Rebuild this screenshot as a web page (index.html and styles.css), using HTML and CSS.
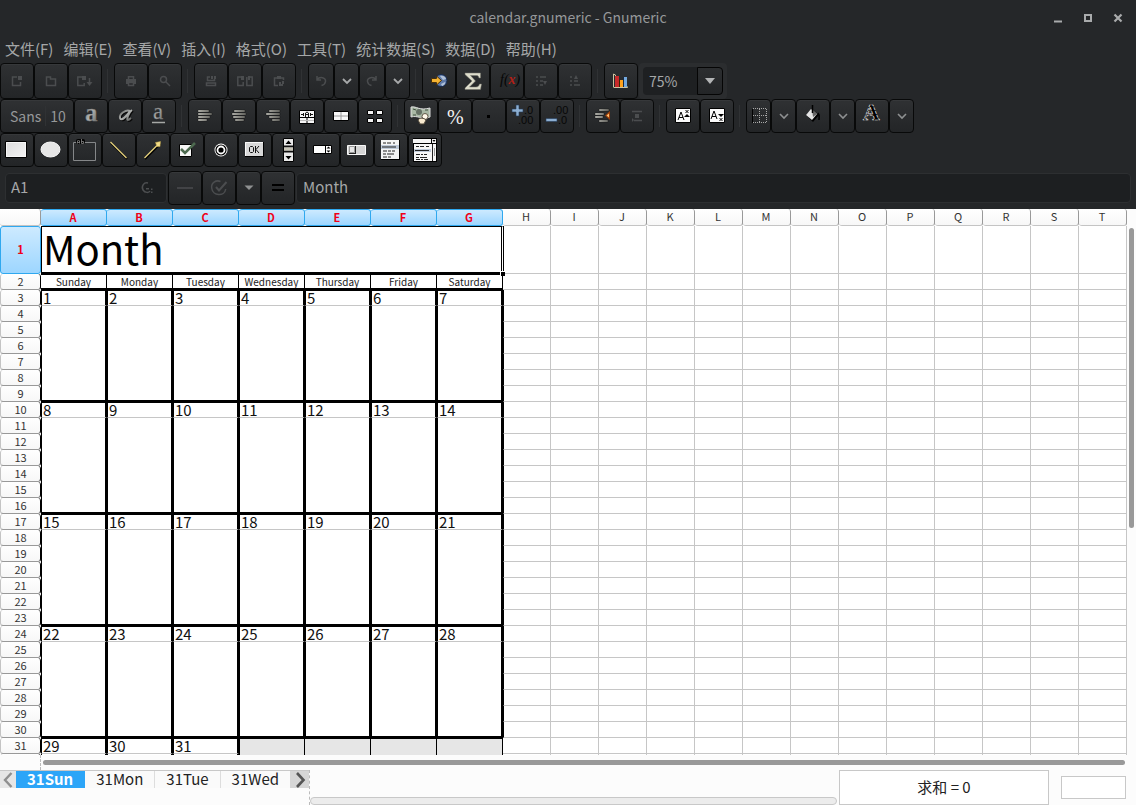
FILE: index.html
```html
<!DOCTYPE html>
<html lang="zh-CN">
<head>
<meta charset="utf-8">
<title>calendar.gnumeric - Gnumeric</title>
<link rel="stylesheet" href="styles.css">
</head>
<body>
<svg class="defs" aria-hidden="true">
  <defs>
    <linearGradient id="metal" x1="0" y1="0" x2="1" y2="1"><stop offset="0" stop-color="#606260"/><stop offset=".5" stop-color="#b0b2b0"/><stop offset="1" stop-color="#585a58"/></linearGradient>
    <linearGradient id="bar" x1="0" y1="0" x2="1" y2="0"><stop offset="0" stop-color="#d4d4cc"/><stop offset="1" stop-color="#74746e"/></linearGradient>
    <linearGradient id="paper" x1="0" y1="0" x2="1" y2="1"><stop offset="0" stop-color="#dcdcdc"/><stop offset="1" stop-color="#f4f4f4"/></linearGradient>
  </defs>
</svg>

<header class="chrome">
  <div class="titlebar">
    <h1 class="title">calendar.gnumeric - Gnumeric</h1>
    <div class="window-buttons">
      <button aria-label="最小化"><svg width="12" height="12"><path d="M2 9.500h8" stroke="#a9abac" stroke-width="2"/></svg></button>
      <button aria-label="最大化"><svg width="12" height="12"><path d="M3 3h6v6H3z" fill="none" stroke="#a9abac" stroke-width="2"/></svg></button>
      <button aria-label="关闭"><svg width="12" height="12"><path d="M2.500 2.500l7 7m0-7l-7 7" stroke="#a9abac" stroke-width="2.200"/></svg></button>
    </div>
  </div>

  <nav class="menubar">
    <button>文件(F)</button><button>编辑(E)</button><button>查看(V)</button><button>插入(I)</button><button>格式(O)</button><button>工具(T)</button><button>统计数据(S)</button><button>数据(D)</button><button>帮助(H)</button>
  </nav>

  <div class="toolbar toolbar-standard">
    <div class="group">
      <button class="tool dim" aria-label="新建"><svg class="s16" viewBox="0 0 16 16"><path d="M8 4H3.500v8.500h8V9" /><path class="f" d="M9 3h4v4H9z"/></svg></button>
      <button class="tool dim" aria-label="打开"><svg class="s16" viewBox="0 0 16 16"><path d="M3.500 12.500V4h4v2h5v6.500z"/></svg></button>
      <button class="tool dim" aria-label="保存"><svg class="s16" viewBox="0 0 16 16"><path d="M5 4H.8v8.500h6.400V10M12.500 5v6"/><path class="f" d="M5 3h4v4H5zM9.500 9h6l-3 4z"/></svg></button>
    </div>
    <div class="group">
      <button class="tool dim" aria-label="打印"><svg class="s16" viewBox="0 0 16 16"><path d="M5.500 6V3.700h5V6M5.500 9.500h5v3h-5z"/><path class="f" d="M3 6h10v5h-2V9H5v2H3z"/></svg></button>
      <button class="tool dim" aria-label="打印预览"><svg class="s16" viewBox="0 0 16 16"><circle cx="6.500" cy="6.500" r="3"/><path d="M9 9l4 4"/></svg></button>
    </div>
    <div class="group">
      <button class="tool dim" aria-label="剪切"><svg class="s16" viewBox="0 0 16 16"><path d="M7 4H4.500v3.500h7V6M3.500 10h9v2.500h-9z"/><path class="f" d="M8 3h2v3H8zM11 3h2v3h-2z"/></svg></button>
      <button class="tool dim" aria-label="复制"><svg class="s16" viewBox="0 0 16 16"><path d="M4 4H.8v8.500h5.400V9M13 4h2.200v8.500H9.800V4"/><path class="f" d="M4 3h3v4H4zM11 3h2v4h-2z"/></svg></button>
      <button class="tool dim" aria-label="粘贴"><svg class="s16" viewBox="0 0 16 16"><path d="M7 12.500H3.500V5h9v2"/><path class="f" d="M6 3h4v3H6zM8 9h2v4H8zM10 11h2v2h-2zM11 8h2v3h-2z"/></svg></button>
    </div>
    <div class="group">
      <button class="tool narrow dim" aria-label="撤销"><svg class="s16" viewBox="0 0 16 16"><path d="M4 3v4h4M4 6.500c3-3.500 9-2 8.500 2-.3 2-2 3.500-4 4"/></svg></button>
      <button class="tool narrow" aria-label="撤销列表"><svg class="s16" viewBox="0 0 16 16"><path d="M4 6l4 4 4-4" fill="none" stroke="#a8aaab" stroke-width="1.800"/></svg></button>
      <button class="tool narrow dim" aria-label="重做"><svg class="s16" viewBox="0 0 16 16"><path d="M12 3v4H8M12 6.500c-3-3.500-9-2-8.500 2 .3 2 2 3.500 4 4"/></svg></button>
      <button class="tool narrow" aria-label="重做列表"><svg class="s16" viewBox="0 0 16 16"><path d="M4 6l4 4 4-4" fill="none" stroke="#a8aaab" stroke-width="1.800"/></svg></button>
    </div>
    <div class="group">
      <button class="tool" aria-label="超链接"><svg class="s24" viewBox="0 0 24 24"><circle cx="14" cy="11.500" r="6" fill="#5f7aa8" stroke="#172b50"/><path d="M13 7c3-1 6 1 6 3l-3 1zM14 15l4-2c1 2-2 4-3 4z" fill="#b1c1d7"/><path d="M4.500 9.500h5V7l5 4.500-5 4.500v-2.500h-5z" fill="#f4b331" stroke="#49300a"/></svg></button>
      <button class="tool" aria-label="求和"><svg class="s24" viewBox="0 0 24 24"><path d="M4 4h15.500v5H18c-.5-2-1-2.500-3-2.500H9.500L14.500 12l-6 6H15c2 0 3-1 3.500-3h2l-1 5.500H4V19l7-7L4 5.500z" fill="#dddccb" stroke="#77766c" stroke-width=".5"/></svg></button>
      <button class="tool" aria-label="函数"><svg class="s24" viewBox="0 0 24 24"><text x="5" y="15" class="fx">f(<tspan fill="#b32017" font-weight="bold">x</tspan>)</text></svg></button>
      <button class="tool dim" aria-label="升序"><svg class="s16" viewBox="0 0 16 16"><path d="M3 4h2M3 8h2M3 12h2M7 4h6M7 8h3M7 12h3"/><path class="f" d="M10 8h4l-2 4z"/></svg></button>
      <button class="tool dim" aria-label="降序"><svg class="s16" viewBox="0 0 16 16"><path d="M3 4h2M3 8h2M3 12h2M7 8h4M7 12h6"/><path class="f" d="M7 6l2-4 2 4z"/></svg></button>
    </div>
    <div class="group">
      <button class="tool" aria-label="图表"><svg class="s24" viewBox="0 0 24 24"><path d="M4.500 18V5l2 1v2M4.500 18.500h14l-1-2" fill="none" stroke="#d0c4a0"/><path d="M6 7h4v11H6z" fill="#c92a2a"/><path d="M10 11h1v7h-1z" fill="#3d2500"/><path d="M11 11h3v7h-3z" fill="#ffa21c"/><path d="M14 8h1v10h-1z" fill="#192b42"/><path d="M15 8h3v10h-3z" fill="#74a9df"/></svg></button>
    </div>
    <div class="zoom">
      <input class="zoom-entry" value="75%" aria-label="缩放">
      <button class="zoom-arrow" aria-label="缩放列表"><svg width="12" height="8"><path d="M1 1h10L6 7z" fill="#b3b5b6"/></svg></button>
    </div>
  </div>

  <div class="toolbar">
    <div class="group">
      <button class="tool font" aria-label="字体 Sans 10"><span class="family">Sans</span><span class="size">10</span></button>
      <button class="tool" aria-label="粗体"><svg class="s24" viewBox="0 0 24 24"><text class="letter" x="6" y="17" font-size="25" font-weight="bold">a</text></svg></button>
      <button class="tool" aria-label="斜体"><svg class="s24" viewBox="0 0 24 24"><path d="M19 6c-3 2-6 10-4 10 1 0 2-1 3-2M17 7c-4-2-11 3-10 7 1 4 7-2 10-7" fill="none" stroke="#080808" stroke-width="2" transform="translate(1 1)"/><path d="M19 6c-3 2-6 10-4 10 1 0 2-1 3-2M17 7c-4-2-11 3-10 7 1 4 7-2 10-7" fill="none" stroke="url(#metal)" stroke-width="2"/></svg></button>
      <button class="tool" aria-label="下划线"><svg class="s24" viewBox="0 0 24 24"><text class="letter" x="6" y="15" font-size="23">a</text><path d="M5 18.500h13" stroke="#a6a8a6" stroke-width="1.500"/></svg></button>
    </div>
    <div class="group">
      <button class="tool" aria-label="左对齐"><svg class="s24" viewBox="0 0 24 24"><path class="bars" d="M5 6h11v2H5zM5 9h14v2H5zM5 12h12v2H5zM5 15h9v2H5z"/></svg></button>
      <button class="tool" aria-label="居中"><svg class="s24" viewBox="0 0 24 24"><path class="bars" d="M7 6h11v2H7zM5 9h14v2H5zM6 12h12v2H6zM8 15h9v2H8z"/></svg></button>
      <button class="tool" aria-label="右对齐"><svg class="s24" viewBox="0 0 24 24"><path class="bars" d="M8 6h11v2H8zM5 9h14v2H5zM8 12h11v2H8zM11 15h8v2h-8z"/></svg></button>
      <button class="tool" aria-label="跨列居中"><svg class="s24" viewBox="0 0 24 24"><path d="M4.500 6.500h15v13h-15z" fill="#f5f5f5" stroke="#000"/><path d="M4 13.500h16M12 14v5" stroke="#000"/><path d="M5 16.500h14" stroke="#bbb"/><path d="M6 10.500h3M15 10.500h3M8.500 9v3M15.500 9v3M10.500 13V9l1.500-1 1.500 1v4M10 10.500h4" fill="none" stroke="#111"/></svg></button>
      <button class="tool" aria-label="合并单元格"><svg class="s24" viewBox="0 0 24 24"><path d="M4.500 7.500h15v9h-15z" fill="#f7f7f7" stroke="#000"/><path d="M12 8v8M5 12h14" stroke="#9b9b9b"/></svg></button>
      <button class="tool" aria-label="拆分单元格"><svg class="s24" viewBox="0 0 24 24"><path d="M4.500 6.500h6v4h-6zM13.500 6.500h6v4h-6zM4.500 14.500h6v4h-6zM13.500 14.500h6v4h-6z" fill="#f2f2f2" stroke="#000"/></svg></button>
    </div>
    <div class="group">
      <button class="tool" aria-label="货币"><svg class="s24" viewBox="0 -1 24 24"><path d="M2 2c6-1 8 4 19 1v9c-9 3-12-2-19 0z" fill="#a9b8a5" stroke="#ddd"/><circle cx="10" cy="7" r="3" fill="#657064"/><path d="M4 4l3 1M16 5l3 0M4 10l3 0" stroke="#405040"/><circle cx="16" cy="11.500" r="3" fill="#fff8ea" stroke="#615848"/><path d="M9 15c2-3 6-2 8 0l-2 4h-4z" fill="#f8ead0" stroke="#4c4437"/></svg></button>
      <button class="tool" aria-label="百分比"><svg class="s24" viewBox="0 0 24 24"><text class="percent" x="4" y="20">%</text></svg></button>
      <button class="tool" aria-label="千位分隔"><svg class="s24" viewBox="0 0 24 24"><path d="M10 11h3v3h-3z" fill="#000"/></svg></button>
      <button class="tool" aria-label="增加小数"><svg class="s24" viewBox="0 0 24 24"><path d="M5 1h3v4h4v3H8v4H5V8H1V5h4z" fill="#8caed1" stroke="#243b57" stroke-width=".6"/><text class="digits" x="13" y="10">.0</text><text class="digits" x="7" y="20">.00</text></svg></button>
      <button class="tool" aria-label="减少小数"><svg class="s24" viewBox="0 0 24 24"><path d="M1 14.500h11v3H1z" fill="#8caed1" stroke="#243b57" stroke-width=".6"/><text class="digits" x="8" y="10">.00</text><text class="digits" x="13" y="20">.0</text></svg></button>
    </div>
    <div class="group">
      <button class="tool" aria-label="减少缩进"><svg class="s24" viewBox="0 0 24 24"><path class="bars" d="M8 5h10v2H8zM4 9h9v2H4zM4 12h8v2H4zM8 16h9v2H8z"/><path d="M19 7v9l-5-4.500z" fill="#9b3d08"/><path d="M18 9.500v4l-2.500-2z" fill="#ffc070"/></svg></button>
      <button class="tool dim" aria-label="增加缩进"><svg class="s16" viewBox="0 0 16 16"><path d="M3 3.500h10M5 12.500h8"/><path class="f" d="M6 6h4v4H6zM3 10v4l2-2z"/></svg></button>
    </div>
    <div class="group">
      <button class="tool" aria-label="上标"><svg class="s24" viewBox="0 0 24 24"><path d="M4.500 4.500h15v14h-15z" fill="#fafafa" stroke="#000"/><path d="M7 16l3-8 3 8M8 13.500h4M14.500 6l3 3m0-3l-3 3" fill="none" stroke="#000"/><path d="M13 13l3-3 3 3z"/></svg></button>
      <button class="tool" aria-label="下标"><svg class="s24" viewBox="0 0 24 24"><path d="M4.500 4.500h15v14h-15z" fill="#fafafa" stroke="#000"/><path d="M6 15l3-8 3 8M7 12.500h4M14.500 14l3 3m0-3l-3 3" fill="none" stroke="#000"/><path d="M13 10h6l-3 3z"/></svg></button>
    </div>
    <div class="group">
      <button class="tool narrow" aria-label="边框"><svg class="s16" viewBox="0 0 16 16"><path d="M1.500 1v14" stroke="#000"/><path d="M2 .5h13.500v14H2M8.500 1v13M2 7.500h13" fill="none" stroke="#a8a8a8" stroke-dasharray="1 1"/></svg></button>
      <button class="tool narrow" aria-label="边框列表"><svg class="s16" viewBox="0 0 16 16"><path d="M4 6l4 4 4-4" fill="none" stroke="#8e9091" stroke-width="1.600"/></svg></button>
      <button class="tool" aria-label="填充颜色"><svg class="s24" viewBox="0 0 24 24"><path d="M11 5l7 6-6 7-7-7z" fill="#000"/><path d="M10 5l6 5-5 6-6-5z" fill="#e5e5e5"/><path d="M11 5l5 5-4 3z" fill="#666"/><path d="M11.500 1v8M17 9c2 2 1 4 1 7" fill="none" stroke="#000" stroke-width="1.500"/></svg></button>
      <button class="tool narrow" aria-label="填充颜色列表"><svg class="s16" viewBox="0 0 16 16"><path d="M4 6l4 4 4-4" fill="none" stroke="#8e9091" stroke-width="1.600"/></svg></button>
      <button class="tool" aria-label="文字颜色"><svg class="s24" viewBox="0 0 24 24"><text class="color-letter" x="3" y="16">A</text></svg></button>
      <button class="tool narrow" aria-label="文字颜色列表"><svg class="s16" viewBox="0 0 16 16"><path d="M4 6l4 4 4-4" fill="none" stroke="#8e9091" stroke-width="1.600"/></svg></button>
    </div>
  </div>

  <div class="toolbar">
    <div class="group">
      <button class="tool" aria-label="矩形"><svg class="s24" viewBox="0 0 24 24"><path d="M.5 3.500h21v16H.5z" fill="url(#paper)" stroke="#000"/><path d="M1.500 4.500h19v14h-19z" fill="none" stroke="#f7f7f7"/></svg></button>
      <button class="tool" aria-label="椭圆"><svg class="s24" viewBox="0 0 24 24"><ellipse cx="11.500" cy="11.500" rx="9.500" ry="7.500" fill="#e6e6e6" stroke="#f8f8f8"/></svg></button>
      <button class="tool" aria-label="框架"><svg class="s24" viewBox="0 0 24 24"><path d="M.5 4.500h22v18H.5z" fill="none" stroke="#858789"/><rect x="3" y="1" width="9" height="5" rx="2"/><path d="M4.500 5.500V3L5.500 2l1 1v2.500M4.500 4.500h2M8.500 1v4.500h2v-2h-2" fill="none" stroke="#888" stroke-width=".8"/></svg></button>
      <button class="tool" aria-label="直线"><svg class="s24" viewBox="0 0 24 24"><path d="M4 5l16 16" stroke="#000" stroke-width="2"/><path d="M3.500 4l16 16" stroke="#e9d57f" stroke-width="1.200"/></svg></button>
      <button class="tool" aria-label="箭头"><svg class="s24" viewBox="0 0 24 24"><path d="M4 21L19 6" stroke="#000" stroke-width="2"/><path d="M3.500 20L18 5.500" stroke="#e9d57f" stroke-width="1.200"/><path d="M14.500 4.500l5-1-.5 5-3 0z" fill="#f2dc87" stroke="#c3a749" stroke-width=".5"/></svg></button>
      <button class="tool" aria-label="复选框"><svg class="s24" viewBox="0 0 24 24"><path d="M4.500 6.500h12v12h-12z" fill="#f6f6f6" stroke="#000"/><path d="M6 11l4 4L20 5" fill="none" stroke="#4d6a4f" stroke-width="2.600"/></svg></button>
      <button class="tool" aria-label="单选按钮"><svg class="s24" viewBox="0 0 24 24"><circle cx="12" cy="12" r="6.500" fill="#fff"/><circle cx="12" cy="12" r="5" fill="none" stroke="#000" stroke-width="1.200"/><circle cx="12" cy="12" r="2.600"/></svg></button>
      <button class="tool" aria-label="按钮"><svg class="s24" viewBox="0 0 24 24"><path d="M2 4h19v15H2z"/><path d="M2 4h18v14H2z" fill="#d8d8d8" /><path d="M2.500 18V4.500H20" fill="none" stroke="#f8f8f8"/><path d="M7.500 8.500h2l1 1v4l-1 1h-2l-1-1v-4zM12.500 8v7M16 8l-3 3.500 3 3.500" fill="none" stroke="#111"/></svg></button>
      <button class="tool" aria-label="滚动条"><svg class="s24" viewBox="0 0 24 24"><path d="M6.500.500h10v23h-10z" fill="#e9e9e9" stroke="#000"/><path d="M7 8.500h9M7 13.500h9" stroke="#111" stroke-width="2"/><path d="M8.500 6l3-3.500 3 3.500zM8.500 18l3 3.500 3-3.500z"/><path d="M7 9.500h9v3H7z" fill="#c8c6b8"/></svg></button>
      <button class="tool" aria-label="微调按钮"><svg class="s24" viewBox="0 0 24 24"><path d="M2.500 7.500h18v8h-18z" fill="#fff" stroke="#000"/><path d="M14.500 7v9" stroke="#000"/><path d="M15.500 10.500l2-2 2 2zM15.500 12.500l2 2 2-2z"/></svg></button>
      <button class="tool" aria-label="滑块"><svg class="s24" viewBox="0 0 24 24"><path d="M2.500 7.500h18v9h-18z" fill="#d5d5d5" stroke="#f8f8f8"/><path d="M4.500 8.500h5v6h-5z" fill="#e7e7e7" stroke="#999"/><path d="M10.500 8v8M4 15.500h6" stroke="#222"/></svg></button>
      <button class="tool" aria-label="列表"><svg class="s24" viewBox="0 0 24 24"><path d="M2 2h19v20H2z"/><path d="M2 2h18v19H2z" fill="#f4f4f4"/><path d="M2 7h18v4H2z" fill="#bfcad9"/><path d="M4 5h3m1 0h4m2 0h2M3 9h14M4 13h4m1 0h3m1 0h3M4 16h3m1 0h7M4 19h4m1 0h3" stroke="#222" stroke-width="1.200"/></svg></button>
      <button class="tool" aria-label="组合框"><svg class="s24" viewBox="0 0 24 24"><path d="M0 0h24v24H0z"/><path d="M0 1h18v4H0zM19 1h4v4h-4zM1 6h22v17H1z" fill="#f6f6f6"/><path d="M19.500 2h3L21 4z"/><path d="M1 11h17v3H1z" fill="#bfcad9"/><path d="M3 8.500h3m1 0h4m2 0h3M2 12.500h14M3 16.500h4m1 0h2m1 0h3M3 19.500h3m1 0h7M3 21.500h4m1 0h2m1 0h4M19.500 6v17" stroke="#222"/><path d="M21.500 10v8" stroke="#999"/></svg></button>
    </div>
  </div>

  <div class="formula-bar">
    <div class="name-box"><input value="A1" aria-label="单元格"><svg width="14" height="14"><path d="M8 2C4 1 1 5 3 9c2 3 6 3 7 1" fill="none" stroke="#4d4f51" stroke-width="1.500"/><path d="M11 7.500h1.500V9H11zM11 10.500h1.500V12H11zM6 7h3v1.500H6z" fill="#4d4f51"/></svg></div>
    <div class="group">
      <button class="tool dim" aria-label="取消"><svg class="s16" viewBox="0 0 16 16"><path d="M0 8h16"/></svg></button>
      <button class="tool dim" aria-label="接受"><svg class="s16" viewBox="0 0 16 16"><path d="M9.500 1.500C5-.500 0 3 .700 8c.700 8 13 9 14 1"/><path d="M5 7l3 3.500L15.500 2" stroke-width="2"/></svg></button>
      <button class="tool narrow" aria-label="接受列表"><svg width="12" height="8"><path d="M1.500 1.500h9L6 6z" fill="#8f9192"/></svg></button>
      <button class="tool" aria-label="输入公式"><svg width="12" height="8"><path d="M0 1h12M0 6h12" stroke="#000" stroke-width="2"/></svg></button>
    </div>
    <input class="formula" value="Month" aria-label="公式">
  </div>
</header>

<main class="workspace">
  <div class="sheet"><table class="grid" id="grid"></table></div>
  <div class="vscroll"><div class="thumb"></div></div>
</main>
<div class="hscroll"><div class="thumb"></div></div>

<footer class="status">
  <div class="tabs">
    <button class="arrow" aria-label="上一张"><svg width="12" height="16"><path d="M9.500 1L3 8l6.500 7" fill="none" stroke="#8f8f8f" stroke-width="2.400"/></svg></button>
    <button class="tab active">31Sun</button><button class="tab">31Mon</button><button class="tab">31Tue</button><button class="tab">31Wed</button>
    <button class="arrow next" aria-label="下一张"><svg width="12" height="16"><path d="M3 1l6.500 7L3 15" fill="none" stroke="#555" stroke-width="2.600"/></svg></button>
  </div>
  <div class="message"><div class="track"></div></div>
  <output class="sum">求和 = 0</output>
  <div class="progress"></div>
</footer>
<script src="app.js"></script>
</body>
</html>
```
FILE: styles.css
```css
* { box-sizing: border-box; }
body {
  margin: 0;
  height: 100vh;
  display: flex;
  flex-direction: column;
  overflow: hidden;
  background: #fcfcfc;
  color: #222;
  font: 15px/20px "Noto Sans CJK SC", sans-serif;
}
button, input {
  font: inherit;
  color: inherit;
  margin: 0;
  padding: 0;
  border: 0;
  background: none;
}
input { min-width: 0; outline: 0; }
svg { display: block; overflow: visible; }
.defs { position: absolute; width: 0; height: 0; }

.chrome {
  flex: none;
  background: #252729;
  color: #a5a7a8;
  padding-bottom: 4px;
}
.titlebar {
  display: grid;
  grid-template-columns: 1fr auto 1fr;
  align-items: center;
  height: 36px;
}
.title { grid-column: 2; margin: 0; padding-bottom: 2px; font-size: 14px; font-weight: 400; color: #96989a; }
.window-buttons { display: flex; justify-content: flex-end; gap: 18px; padding-right: 12px; }
.menubar { display: flex; gap: 10px; height: 27px; align-items: center; padding: 0 0 2px 5px; }
.menubar button { white-space: nowrap; }

.toolbar { display: flex; height: 34px; align-items: stretch; font-size: 14px; }
.toolbar-standard { height: 36px; }
.group { display: flex; }
.group + .group { margin-left: 12px; position: relative; }
.group + .group::before {
  content: "";
  position: absolute;
  left: -7px;
  top: 6px;
  bottom: 6px;
  width: 1px;
  background: #303234;
}
.tool {
  width: 34px;
  display: flex;
  align-items: center;
  justify-content: center;
  border: 1px solid #080909;
  border-radius: 4px;
  background: linear-gradient(#2f3133, #232527);
  box-shadow: inset 0 1px #36383a;
}
.narrow { width: 25px; }
.s16 { width: 16px; height: 16px; }
.s24 { width: 24px; height: 24px; }
.dim svg { fill: none; stroke: #4b4d4f; stroke-width: 1.5; }
.dim .f { fill: #4b4d4f; stroke: none; }
.toolbar-standard .group:nth-child(4) .tool:nth-child(odd) { width: 26px; }
.bars { fill: url(#bar); stroke: #111; stroke-width: .4; }
.fx { font: italic 14px "Liberation Serif", serif; fill: #050505; }
.letter { font-family: "Liberation Serif", serif; fill: url(#metal); stroke: #777; stroke-width: .3; }
.percent { font: 20px "Liberation Serif", serif; fill: #f4f4f4; }
.digits { font: 11px "Liberation Sans", sans-serif; fill: #070707; }
.color-letter { font: bold 23px "Liberation Serif", serif; fill: #000; stroke: #e4e4e4; stroke-width: .7; stroke-dasharray: 3 1; }
.font { width: 74px; justify-content: flex-start; color: #969899; }
.family { padding: 0 4px 0 9px; border-right: 1px solid #303234; }
.size { padding-left: 4px; }

.zoom {
  display: flex;
  align-items: stretch;
  margin-left: 1px;
  padding: 4px;
  border-radius: 4px;
  background: #2b2d2f;
}
.zoom-entry { width: 54px; padding-left: 6px; border-radius: 4px 0 0 4px; background: #1e2022; }
.zoom-arrow {
  width: 26px;
  display: grid;
  place-items: center;
  border: 1px solid #050505;
  border-radius: 0 4px 4px 0;
  background: linear-gradient(#2c2e30, #232527);
}

.formula-bar { display: flex; height: 34px; margin: 4px 5px 0; align-items: stretch; }
.name-box, .formula {
  margin: 2px 0;
  border: 1px solid #2d2f31;
  border-radius: 4px;
  background: #1d1f21;
}
.name-box { display: flex; align-items: center; width: 162px; margin-right: 1px; padding: 0 12px 0 5px; }
.name-box input { flex: 1; padding-bottom: 2px; }
.formula { flex: 1; margin-left: 1px; padding: 0 0 2px 6px; }

.workspace { flex: 1; min-height: 0; display: flex; }
.sheet { flex: 1; min-width: 0; overflow: hidden; background: #fff; }
.grid { table-layout: fixed; border-collapse: separate; border-spacing: 0; width: 1127px; }
.col-head { width: 41px; }
.col-day { width: 66px; }
.col-std { width: 48px; }
.grid tr { height: 16px; }
.grid tr.letters { height: 17px; }
.grid tr.month-row { height: 48px; }
.grid th, .grid td { padding: 0; overflow: hidden; white-space: nowrap; border: 0 solid #000; }
.grid th {
  padding-bottom: 2px;
  font-size: 11px;
  line-height: 12px;
  font-weight: 400;
  color: #333;
  border: 1px solid #c4c4c4;
  border-width: 0 1px 1px 0;
  border-radius: 3px;
  background: linear-gradient(#fff, #f7f7f7);
}
.grid .letters th { border-right-color: #999; padding-right: 1px; }
.grid tbody th { border-bottom-color: #999; border-left-width: 1px; }
.grid th.selected {
  font-weight: 700;
  color: #f00018;
  border-color: #2fa8ef;
  border-top-width: 1px;
  background: linear-gradient(#cdeaff, #9dd6ff);
}
.grid tbody th.edge { border-right-color: #000; }
.grid td { line-height: 12px; border-right: 1px solid #c6c6c6; border-bottom: 1px solid #c6c6c6; }
.grid td.month {
  font-size: 40px;
  line-height: 40px;
  color: #000;
  padding: 0 0 4px 1px;
  border-top: 1px solid #000;
  border-left: 1px solid #000;
  border-right: 1px solid #fff;
  border-bottom: 2px solid #000;
  box-shadow: inset -1px 0 #000;
}
.grid td.beside-month { border-left: 1px solid #000; }
.grid td.weekday {
  padding-top: 1px;
  font-size: 10px;
  line-height: 12px;
  text-align: center;
  border-top: 1px solid #000;
  border-bottom: 2px solid #000;
  border-right: 1px solid #000;
}
.grid td.day { color: #111; border-left: 1px solid #000; border-right: 2px solid #000; padding: 0 0 1px 1px; }
.grid td.week-middle { border-bottom: 0; }
.grid td.week-end { border-bottom: 2px solid #000; }
.grid td.week-start { border-top: 1px solid #000; }
.grid td.right-edge { border-left: 1px solid #000; }
.grid td.blank-day { background: #e6e6e6; border-bottom: 0; border-right: 1px solid #000; border-left: 0; }
.grid td.blank-day.first { border-left: 1px solid #000; }
.handle {
  position: absolute;
  left: 500px;
  top: 271px;
  width: 5px;
  height: 5px;
  background: #000;
  border-top: 1px solid #fff;
  border-left: 1px solid #fff;
}

.vscroll { width: 9px; flex: none; padding: 19px 2px 0; }
.vscroll .thumb { height: 57%; border-radius: 3px; background: #999; }
.hscroll { flex: none; height: 15px; margin-left: 40px; padding: 5px 11px 0 2px; border-left: 1px dashed #bbb; }
.hscroll .thumb { height: 5px; border-radius: 3px; background: #999; }

.status { flex: none; display: flex; align-items: flex-start; height: 35px; }
.tabs { display: flex; height: 18px; background: #fafafa; border-top: 1px solid #c8c8c8; }
.arrow { width: 16px; display: grid; place-items: center; background: #e6e6e6; }
.arrow.next { width: 19px; background: #d6d6d6; }
.tab { padding: 0 11px 1px; line-height: 16px; border-right: 1px solid #ddd; color: #222; }
.tab.active { font-weight: 700; color: #fff; background: #2ca5f8; border-right-color: #2ca5f8; }
.tab:nth-last-child(2) { border-right: 0; }
.message { flex: 1; align-self: stretch; display: flex; align-items: flex-end; margin-right: 2px; border-left: 1px dashed #bbb; }
.track { flex: 1; height: 8px; border: 1px solid #c8c8c8; border-radius: 4px; background: #ececec; }
.sum { width: 210px; height: 35px; padding-bottom: 2px; display: grid; place-items: center; border: 1px solid #c8c8c8; background: #fff; }
.progress { width: 65px; height: 23px; margin: 6px 10px 0 12px; border: 1px solid #c8c8c8; background: #fff; }
```
FILE: app.js
```js
const DAYS = ["Sunday", "Monday", "Tuesday", "Wednesday", "Thursday", "Friday", "Saturday"];
const LETTERS = "ABCDEFGHIJKLMNOPQRST".split("");
const ROWS = 32;
const LAST_LABEL = 31;
const LAST_DAY = 31;

function cell(tag, cls, text = "", extra = "") {
  return `<${tag} class="${cls}"${extra}>${text}</${tag}>`;
}

let html = '<colgroup><col class="col-head">' +
  LETTERS.map((_, i) => `<col class="${i < 7 ? "col-day" : "col-std"}">`).join("") +
  "</colgroup><thead><tr class=\"letters\"><th></th>" +
  LETTERS.map((l, i) => cell("th", i < 7 ? "selected" : "", l)).join("") +
  "</tr></thead><tbody>";

for (let r = 1; r <= ROWS; r++) {
  html += `<tr class="${r === 1 ? "month-row" : ""}">`;
  html += cell("th", r === 1 ? "selected" : "edge", r <= LAST_LABEL ? r : "");
  if (r === 1) html += cell("td", "month", "Month", ' colspan="7"');
  for (let c = 0; c < LETTERS.length; c++) {
    if (c > 6) {
      const cls = c > 7 ? "" : r === 1 ? "beside-month" : r > 2 && r < 31 ? "right-edge" : "";
      html += cell("td", cls);
    } else if (r === 2) {
      html += cell("td", "weekday", DAYS[c]);
    } else if (r > 2) {
      const offset = (r - 3) % 7;
      const day = Math.floor((r - 3) / 7) * 7 + c + 1;
      let cls = day > LAST_DAY ? "day blank-day" : "day";
      if (day === LAST_DAY + 1) cls += " first";
      if (offset === 0) cls += " week-start";
      else if (offset === 6) cls += " week-end";
      else cls += " week-middle";
      html += cell("td", cls, offset === 0 && day <= LAST_DAY ? day : "");
    }
  }
  html += "</tr>";
}
document.getElementById("grid").innerHTML = html + "</tbody>";

const handle = document.createElement("div");
handle.className = "handle";
document.body.append(handle);
```
